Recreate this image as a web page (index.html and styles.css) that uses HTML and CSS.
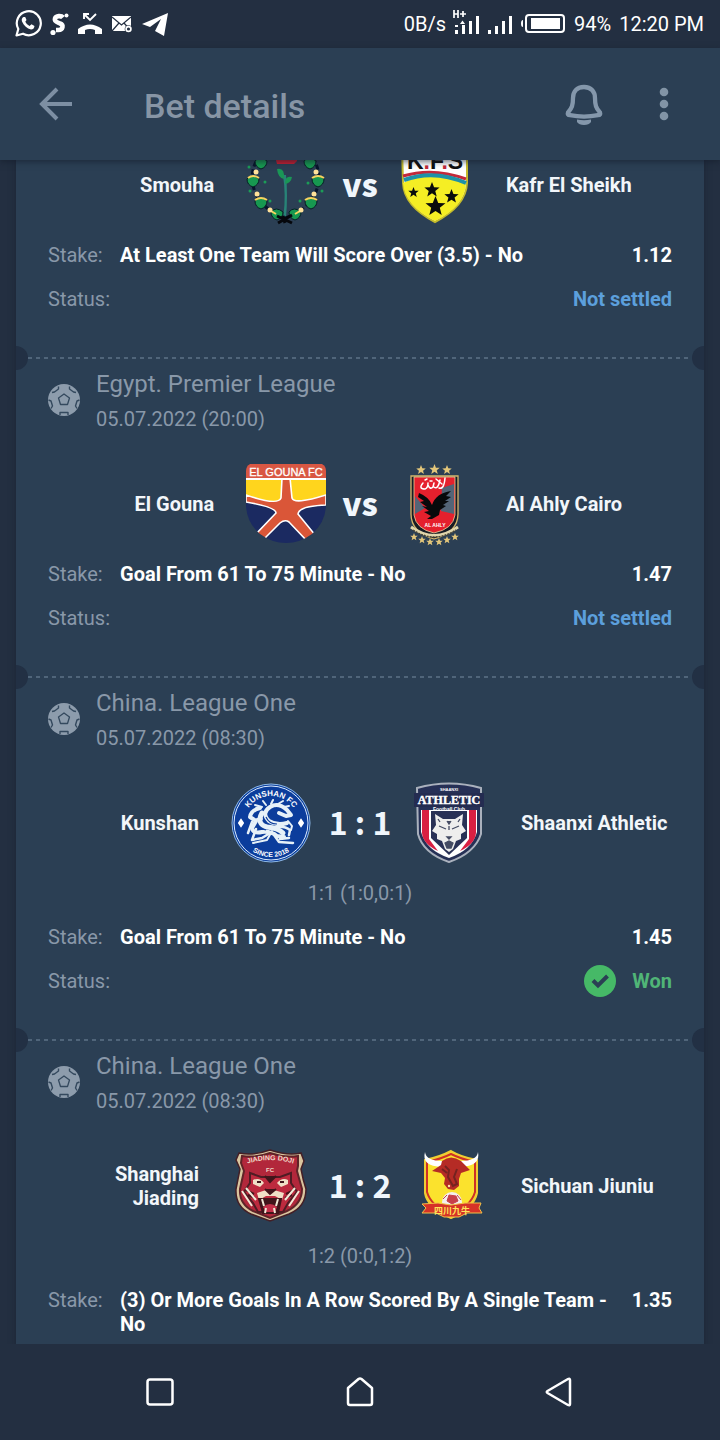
FILE: index.html
```html
<!DOCTYPE html>
<html lang="en">
<head>
<meta charset="utf-8">
<meta name="viewport" content="width=device-width, initial-scale=1">
<title>Bet details</title>
<link rel="stylesheet" href="styles.css">
</head>
<body>
<svg class="defs" aria-hidden="true">
  <symbol id="ball" viewBox="0 0 32 32">
    <circle cx="16" cy="16" r="16" fill="#8d9cac"/>
    <path d="M16 10L21.500 14L19.500 20.500H12.500L10.500 14Z" fill="none" stroke="#34495e" stroke-width="1.300" stroke-linejoin="round"/>
    <g fill="none" stroke="#34495e" stroke-width="1.400" stroke-linejoin="round">
      <path d="M4 8.500L6.500 8L10.500 5L10.500 2.500"/>
      <path d="M21.500 2.500L21.500 5L25.500 8L28 8.500"/>
      <path d="M.5 16L3 17L4.500 22L3 24.500"/>
      <path d="M31.500 16L29 17L27.500 22L29 24.500"/>
      <path d="M12 31V28.500H20V31"/>
    </g>
  </symbol>
  <symbol id="star5" viewBox="-10 -10 20 20">
    <path d="M0-10L2.600-3.400L9.500-3.100L4.100 1.300L5.900 8.100L0 4.200L-5.900 8.100L-4.100 1.300L-9.500-3.100L-2.600-3.400Z"/>
  </symbol>
</svg>

<div class="statusbar">
  <div class="notices">
    <svg width="28" height="30" viewBox="0 0 28 30" fill="none" stroke="#fff"><path d="M2.500 26.500L4.300 20A12 12 0 1 1 9 24.700Z" stroke-width="2.200" stroke-linejoin="round"/><path d="M9.500 8Q7 9.500 8 12.500C10 17 13 19.500 17 20.500Q20 20.500 20.500 17L17.500 15.300L15.500 17Q12.500 15.500 11.300 12.700L12.500 11L11.200 8Z" fill="#fff" stroke="none"/></svg>
    <svg width="19" height="24" viewBox="0 0 19 24"><path d="M13 5.500C11.500 3.500 6 3.500 5 6.500C4 10 8 10.500 10 11.500C14 13 13 18 8.500 18H6" fill="none" stroke="#fff" stroke-width="4.600"/><circle cx="16.500" cy="3.500" r="2" fill="#fff"/><circle cx="3" cy="20.500" r="2.600" fill="#fff"/></svg>
    <svg width="26" height="24" viewBox="0 0 26 24"><path d="M7 7V2H12M7 2L13 8L19 2" fill="none" stroke="#fff" stroke-width="1.900"/><path d="M1 22V17Q13 8 25 17V22H18V18Q13 16 8 18V22Z" fill="#fff"/></svg>
    <svg width="22" height="18" viewBox="0 0 22 18"><rect x="1" y="1" width="19" height="15" fill="#fff"/><path d="M1 2L10.500 10L20 2M1 16L8 8M20 16L13 8" fill="none" stroke="#232f41" stroke-width="1.200"/><circle cx="17.500" cy="14" r="3.800" fill="#232f41"/><circle cx="17.500" cy="14" r="2.400" fill="none" stroke="#fff" stroke-width="1.700"/></svg>
    <svg width="27" height="24" viewBox="0 0 27 24"><path d="M1 12L27 1L23 24L14 19L20 7L9 15Z" fill="#fff"/></svg>
  </div>
  <div class="vitals">
    <span>0B/s</span>
    <svg class="signals" width="58" height="28" viewBox="1 3 58 28" fill="#fff"><path d="M2 23H5V27H2ZM9 18H12V27H9ZM16 14H19V27H16ZM23 9H26V27H23ZM35 23H38V27H35ZM42 19H45V27H42ZM49 14H52V27H49ZM56 9H59V27H56ZM7 17H12L9.500 13.500ZM2 18H5V20H2Z"/><path d="M1 3V11M5 3V11M1 7H5M7 7H13M10 4V10" stroke="#fff" stroke-width="1.700"/></svg>
    <svg width="46" height="20" viewBox="0 0 46 20"><rect x="6" y="1" width="38" height="17" rx="3" fill="none" stroke="#fff" stroke-width="2"/><rect x="11" y="4" width="29" height="11" fill="#fff"/><path d="M3 6Q1 6 1 9.500Q1 13 3 13Z" fill="#fff"/></svg>
    <span>94%</span>
    <span>12:20 PM</span>
  </div>
</div>

<header class="appbar">
  <button class="icon-btn" aria-label="Back"><svg width="34" height="34" viewBox="0 0 34 34" fill="none" stroke="#7d8fa3" stroke-width="4"><path d="M18 2L3 17L18 32M3 17H33"/></svg></button>
  <h1 class="title">Bet details</h1>
  <button class="icon-btn" aria-label="Notifications"><svg width="40" height="42" viewBox="0 0 40 42"><path d="M20 4C12.500 4 9 9 9 15C9 22 8 25 4 29.500Q3 32 6 32.200Q20 35 34 32.200Q37 32 36 29.500C32 25 31 22 31 15C31 9 27.500 4 20 4Z" fill="none" stroke="#8497ab" stroke-width="4.300"/><path d="M13 36.500Q20 38 27 36.500V39Q25 42 20 42Q15 42 13 39Z" fill="#8497ab"/></svg></button>
  <button class="icon-btn" aria-label="More options"><svg width="10" height="34" viewBox="0 0 10 34" fill="#8294a6"><circle cx="5" cy="5" r="4.300"/><circle cx="5" cy="17" r="4.300"/><circle cx="5" cy="29" r="4.300"/></svg></button>
</header>

<main class="bets">
  <div class="ticket">
    <section class="bet bet-partial">
      <div class="match">
        <span class="team home">Smouha</span>
        <svg class="crest" viewBox="0 0 80 80" aria-label="Smouha crest">
          <path d="M29 0H50V10Q48 17 39 17Q31 16 29 10Z" fill="#0d1d58"/><path d="M28 8H51V16L48 19H31Z" fill="#c51f32"/>
          <path d="M37 30Q40 50 37.500 70L40 73Q42 50 40 30Z" fill="#288377"/><path d="M31 24Q39 22 38 34Q32 33 31 24M39 39Q39 30 46 32Q45 38 39 39" fill="#1a9656"/>
          <path d="M14 10C0 28 3 60 39 73C76 60 79 28 65 10" fill="none" stroke="#08152c" stroke-width="3" stroke-dasharray="5 3"/>
          <g fill="#179850" stroke="#061e24" stroke-width="1"><path id="acorn" d="M1 34Q6 28 13 34Q13 40 7 42Q1 40 1 34Z"/><use href="#acorn" x="65"/><use href="#acorn" transform="translate(8 22)"/><use href="#acorn" transform="translate(58 22)"/><use href="#acorn" transform="translate(24 33)"/><use href="#acorn" transform="translate(42 33)"/><use href="#acorn" transform="translate(8 -18)"/><use href="#acorn" transform="translate(57 -18)"/></g>
          <g fill="none" stroke="#f6d45f" stroke-width="2"><path d="M2 33Q7 29 13 33M66 33Q72 29 78 33M9 55Q15 51 21 55M59 55Q65 51 71 55M25 66L30 69M49 69L54 66"/></g>
          <g fill="#ffe19a"><circle cx="10" cy="27" r="2.500"/><circle cx="70" cy="27" r="2.500"/><circle cx="11" cy="49" r="2.500"/><circle cx="68" cy="49" r="2.500"/><circle cx="24" cy="65" r="2.500"/><circle cx="55" cy="65" r="2.500"/></g>
          <g fill="#1c9c57"><circle cx="3" cy="22" r="1.500"/><circle cx="19" cy="37" r="1.500"/><circle cx="62" cy="38" r="1.500"/><circle cx="76" cy="46" r="1.500"/><circle cx="4" cy="46" r="1.500"/><circle cx="24" cy="56" r="1.500"/><circle cx="54" cy="56" r="1.500"/></g>
          <path d="M31 71L46 78M46 70L32 78M37 71L39 78" stroke="#05070c" stroke-width="3"/>
        </svg>
        <span class="versus">vs</span>
        <svg class="crest" viewBox="0 0 80 80" aria-label="Kafr El Sheikh crest">
          <path d="M8 2H73V38Q72 61 41 77Q10 61 9 38Z" fill="#fff" stroke="#c4bb2c" stroke-width="2"/>
          <path d="M9 38Q38 23 72 39Q70 62 41 76Q11 61 9 38Z" fill="#f5ee24"/>
          <path d="M9 31Q39 22 72 34" fill="none" stroke="#c3293a" stroke-width="3"/><path d="M10 35Q40 24 72 38" fill="none" stroke="#1e91a8" stroke-width="4"/>
          <text x="41" y="24" text-anchor="middle" class="crest-text kfs">K<tspan fill="#c3293a">.</tspan>F<tspan fill="#c3293a">.</tspan>S</text>
          <g fill="#090b0c"><use href="#star5" x="30" y="37" width="16" height="16"/><use href="#star5" x="31" y="51" width="21" height="21"/><use href="#star5" x="50" y="44" width="15" height="15"/><use href="#star5" x="14" y="42" width="11" height="11"/></g>
        </svg>
        <span class="team away">Kafr El Sheikh</span>
      </div>
      <dl class="facts">
        <div class="fact"><dt>Stake:</dt><dd class="pick">At Least One Team Will Score Over (3.5) - No</dd><dd class="odds">1.12</dd></div>
        <div class="fact"><dt>Status:</dt><dd class="status pending">Not settled</dd></div>
      </dl>
    </section>

    <section class="bet">
      <div class="league">
        <svg class="ball" aria-hidden="true"><use href="#ball"/></svg>
        <div><h2 class="league-name">Egypt. Premier League</h2><p class="date">05.07.2022 (20:00)</p></div>
      </div>
      <div class="match">
        <span class="team home">El Gouna</span>
        <svg class="crest" viewBox="0 0 80 80" aria-label="El Gouna crest">
          <clipPath id="gouna"><path d="M4 0H76Q80 2 80 7V40Q80 58 66 70Q54 79 40 79Q26 79 14 70Q0 58 0 40V7Q0 2 4 0Z"/></clipPath>
          <g clip-path="url(#gouna)">
            <path d="M0 0H80V80H0Z" fill="#1b2a61"/><path d="M0 14H80V39L45 43L0 38Z" fill="#ffd51d"/>
            <path d="M36 14H44L46 34Q48 41 80 31V41Q53 42 52 50L70 72L62 78L43 58Q39 55 34 59L17 76L10 70L30 49Q30 43 0 38V31Q32 42 35 34Z" fill="#da5638" stroke="#fff" stroke-width="1.600"/>
            <path d="M0 0H80V14H0Z" fill="#d95743"/><path d="M0 15H80" stroke="#fff" stroke-width="1.800"/>
          </g>
          <text x="40" y="12" text-anchor="middle" class="crest-text gouna">EL GOUNA FC</text>
        </svg>
        <span class="versus">vs</span>
        <svg class="crest" viewBox="0 0 80 80" aria-label="Al Ahly crest">
          <path d="M17 12H64V50Q64 68 40 75Q17 68 17 50Z" fill="#171c25" stroke="#d4b66b" stroke-width="1.300"/>
          <path d="M20 13H61V51Q59 65 40 69Q22 65 20 51Z" fill="#e5202d" stroke="#e6d69b" stroke-width=".8"/>
          <path d="M48 24L60 20V50L47 47ZM21 32L31 44L21 50Z" fill="#536477"/>
          <path d="M25 29Q35 33 38 41Q42 29 57 27L52 32L57 33L51 37L55 37L49 41L52 42L46 46L45 51L38 55H33L37 52L30 48L35 47L28 42L33 43L26 38L30 37L24 33Z" fill="#07090b"/>
          <g fill="none" stroke="#fff" stroke-width="1.500" stroke-linecap="round"><path d="M29 19Q24 25 31 25Q34 24 34 19M34 21Q36 26 39 23L40 19M40 23Q44 26 46 16M45 24Q50 26 51 14M36 17H38M42 15L48 20M31 16L33 15"/></g>
          <text x="41" y="63" text-anchor="middle" class="crest-text ahly">AL AHLY</text>
          <path d="M17 63Q40 80 64 63" fill="none" stroke="#e0d5ab" stroke-width="3"/><path d="M19 66Q40 80 62 66" fill="none" stroke="#484638" stroke-width="1.500" stroke-dasharray="2 1"/>
          <g fill="#e3c67a"><use href="#star5" x="22" y="1" width="10" height="10"/><use href="#star5" x="35" y="0" width="11" height="11"/><use href="#star5" x="48" y="1" width="10" height="10"/><use href="#star5" x="16" y="69" width="8" height="8"/><use href="#star5" x="24" y="72" width="8" height="8"/><use href="#star5" x="32" y="74" width="8" height="8"/><use href="#star5" x="41" y="74" width="8" height="8"/><use href="#star5" x="49" y="72" width="8" height="8"/><use href="#star5" x="57" y="69" width="8" height="8"/></g>
        </svg>
        <span class="team away">Al Ahly Cairo</span>
      </div>
      <dl class="facts">
        <div class="fact"><dt>Stake:</dt><dd class="pick">Goal From 61 To 75 Minute - No</dd><dd class="odds">1.47</dd></div>
        <div class="fact"><dt>Status:</dt><dd class="status pending">Not settled</dd></div>
      </dl>
    </section>

    <section class="bet">
      <div class="league">
        <svg class="ball" aria-hidden="true"><use href="#ball"/></svg>
        <div><h2 class="league-name">China. League One</h2><p class="date">05.07.2022 (08:30)</p></div>
      </div>
      <div class="match">
        <span class="team home">Kunshan</span>
        <svg class="crest" viewBox="0 0 80 80" aria-label="Kunshan crest">
          <circle cx="40" cy="40" r="39" fill="#0b3d9c" stroke="#8eb9e8" stroke-width="1"/><circle cx="40" cy="40" r="37" fill="none" stroke="#dcecff" stroke-width="1"/>
          <path id="kunshan-top" d="M13 40A27 27 0 0 1 67 40" fill="none"/><path id="kunshan-bottom" d="M6 40A34 34 0 0 0 74 40" fill="none"/>
          <text class="crest-text arc"><textPath href="#kunshan-top" startOffset="50%" text-anchor="middle">KUNSHAN FC</textPath></text>
          <text class="crest-text arc-small"><textPath href="#kunshan-bottom" startOffset="50%" text-anchor="middle">SINCE 2018</textPath></text>
          <g fill="none" stroke="#e6f1f8" stroke-linecap="round" stroke-linejoin="round">
            <path d="M56 40Q46 43 38 38Q30 30 39 24Q47 19 56 27L60 32L55 33L48 30" stroke-width="4"/>
            <path d="M31 30Q25 41 36 44Q47 45 52 50" stroke-width="5"/>
            <path d="M29 25Q20 27 19 34L25 38L21 45Q22 51 31 49Q40 48 46 53L53 54" stroke-width="4"/>
            <path d="M21 39L17 50M25 46L21 57L31 55L39 50M45 44Q54 43 59 47L58 52M43 52L48 59L62 60M49 56L58 55" stroke-width="2.500"/>
            <path d="M35 22L32 18M40 21L42 17M47 21L52 18M53 24L58 23M31 24L24 22M57 38L61 43L60 47M31 36L26 36M41 48L36 57L22 60" stroke-width="2"/>
          </g>
          <path d="M43 25L48 27M40 31Q43 36 51 35M35 34Q38 41 46 41M27 45L35 47" fill="none" stroke="#0b3d9c" stroke-width="1.200"/>
          <path d="M8 40L10 37L12 40L10 43ZM68 40L70 37L72 40L70 43Z" fill="#fff" stroke="#fff" stroke-width="2"/>
        </svg>
        <span class="versus score">1 : 1</span>
        <svg class="crest" viewBox="0 0 80 80" aria-label="Shaanxi Athletic crest">
          <path d="M8 5Q40-4 72 5V51Q66 70 40 79Q14 70 9 51Z" fill="#263056" stroke="#aab1bd" stroke-width="2"/>
          <path d="M12 27H68V49Q63 67 40 75Q17 67 12 49Z" fill="#fff"/><path d="M13 27H20V56L29 68Q14 61 13 50ZM60 27H67V50Q66 61 51 68L60 56Z" fill="#d91f42"/>
          <path d="M22 28H58V55L40 72L22 55Z" fill="#293156"/>
          <path d="M26 31L34 36H46L54 31L53 42L57 48L52 51L52 56L47 58L44 66L40 69L36 66L33 58L28 56L28 51L23 48L27 42Z" fill="#eeeeed"/>
          <path d="M30 43L37 46M50 43L43 46M38 38L40 41L42 38M40 43V47M38 54H42L40 56ZM36 60L40 58L44 60L42 65H38ZM29 36L31 39M51 36L49 39" fill="#444b63" stroke="#444b63" stroke-width="1.300"/>
          <path d="M5 10H75V24H5Z" fill="#242c51"/><text x="40" y="8" text-anchor="middle" class="crest-text tiny">SHAANXI</text><text x="40" y="21" text-anchor="middle" class="crest-text athletic">ATHLETIC</text><text x="40" y="28" text-anchor="middle" class="crest-text tiny club">Football Club</text>
        </svg>
        <span class="team away">Shaanxi Athletic</span>
      </div>
      <p class="periods">1:1 (1:0,0:1)</p>
      <dl class="facts">
        <div class="fact"><dt>Stake:</dt><dd class="pick">Goal From 61 To 75 Minute - No</dd><dd class="odds">1.45</dd></div>
        <div class="fact"><dt>Status:</dt><dd class="status won"><svg class="check" viewBox="0 0 32 32" aria-hidden="true"><circle cx="16" cy="16" r="16" fill="#46b967"/><path d="M9 15.500L14 20.500L23.500 11" fill="none" stroke="#2b3f54" stroke-width="4"/></svg>Won</dd></div>
      </dl>
    </section>

    <section class="bet">
      <div class="league">
        <svg class="ball" aria-hidden="true"><use href="#ball"/></svg>
        <div><h2 class="league-name">China. League One</h2><p class="date">05.07.2022 (08:30)</p></div>
      </div>
      <div class="match">
        <span class="team home">Shanghai Jiading</span>
        <svg class="crest" viewBox="0 0 80 80" aria-label="Shanghai Jiading crest">
          <path d="M8 7Q22 10 39 4Q57 10 70 7L73 15L70 23Q72 34 75 43Q75 61 58 68L39 75L20 68Q4 61 5 43L9 23L5 14Z" fill="#d9c59f" stroke="#431f26" stroke-width="1.500"/>
          <path d="M11 10Q26 12 39 7Q53 12 67 10L67 20L66 25L71 43Q71 58 56 65L39 72L22 65Q8 58 9 43L13 25L10 17Z" fill="#b2273b" stroke="#5f2328" stroke-width="2"/>
          <path d="M19 27L30 31H49L60 27L60 37L66 46L57 57L52 66H27L22 57L13 46L19 37Z" fill="#bd2a3e" stroke="#4f1c24" stroke-width="2"/>
          <path d="M22 34Q29 31 33 37L29 41L22 38ZM46 37Q51 31 57 34L57 38L50 41ZM26 47L35 44L39 48L43 44L53 47L51 54L44 50H35L28 54Z" fill="#f0dfc6"/>
          <path d="M34 43L39 48L45 43M28 53H50L47 67H32ZM15 44L23 48M17 49L24 52M63 44L55 48M61 49L54 52M34 30L39 36L45 30M26 36H30M49 36H53" fill="#42151b" stroke="#42151b" stroke-width="2"/>
          <path d="M32 61Q39 55 46 61L44 66H35Z" fill="#c6314a"/>
          <path d="M31 53L33 60M47 53L45 60M34 67L35 62M44 67L43 62M11 45L21 60M68 45L58 60M15 42L25 54M64 42L54 54" stroke="#f2ead8" stroke-width="2"/>
          <path id="jiading-arc" d="M12 19Q39 9 67 19" fill="none"/><text class="crest-text jiading"><textPath href="#jiading-arc" startOffset="50%" text-anchor="middle">JIADING DOJI</textPath></text><text x="39" y="26" text-anchor="middle" class="crest-text jiading-fc">FC</text>
        </svg>
        <span class="versus score">1 : 2</span>
        <svg class="crest" viewBox="0 0 80 80" aria-label="Sichuan Jiuniu crest">
          <path d="M16 14Q31 11 42 5Q52 11 68 14V47Q65 62 42 72Q18 61 16 47Z" fill="#f8df25" stroke="#f0cd32" stroke-width="2"/><path d="M18 16Q32 13 42 8Q52 13 66 16V46Q62 60 42 69Q22 60 18 46Z" fill="#fbe22d" stroke="#ce3028" stroke-width="2"/>
          <path d="M16 6Q17 15 34 15L33 21Q12 20 16 6ZM69 6Q68 15 51 15L51 21Q72 20 69 6Z" fill="#fff"/>
          <path d="M33 15Q42 8 52 15L61 24L52 27L50 33L50 40L45 44L39 43L35 38L36 32L32 27L23 25L32 19Z" fill="#b52b25"/><path d="M36 20L40 24L39 31L44 40L48 38L45 31L48 23M38 27L33 23" fill="none" stroke="#752320" stroke-width="2"/><circle cx="40" cy="40" r="1.200" fill="#ffe6a8"/>
          <circle cx="43" cy="56" r="10" fill="#f4eeee"/><path d="M40 49L47 50L49 55L43 58L38 55ZM34 53L38 49M48 49L52 54" fill="#c7404a" stroke="#c7404a"/>
          <path d="M13 58L29 57L42 59L56 57L72 57L70 62L73 67H58L50 71H35L27 67H13L17 62Z" fill="#d63227" stroke="#f2c247" stroke-width="1"/><text x="43" y="68" text-anchor="middle" class="crest-text sichuan">四川九牛</text>
        </svg>
        <span class="team away">Sichuan Jiuniu</span>
      </div>
      <p class="periods">1:2 (0:0,1:2)</p>
      <dl class="facts">
        <div class="fact"><dt>Stake:</dt><dd class="pick">(3) Or More Goals In A Row Scored By A Single Team - No</dd><dd class="odds">1.35</dd></div>
      </dl>
    </section>
  </div>
</main>

<nav class="sysnav" aria-label="System">
  <button class="sys-btn" aria-label="Recent apps"><svg width="32" height="32" viewBox="0 0 32 32"><rect x="3.500" y="3.500" width="25" height="25" rx="2.500"/></svg></button>
  <button class="sys-btn" aria-label="Home"><svg width="32" height="32" viewBox="0 0 32 32"><path d="M4 12L14.500 3Q16 2 17.500 3L28 12V27Q28 29 26 29H6Q4 29 4 27Z"/></svg></button>
  <button class="sys-btn" aria-label="Back"><svg width="32" height="32" viewBox="0 0 32 32"><path d="M26 4V28Q26 30 24 29L3.500 17Q2 16 3.500 15L24 3Q26 2 26 4Z"/></svg></button>
</nav>
</body>
</html>
```

FILE: styles.css
```css
* { box-sizing: border-box; }
body {
  margin: 0;
  height: 100vh;
  display: flex;
  flex-direction: column;
  background: #232f41;
  color: #fff;
  font-family: Roboto, "Liberation Sans", sans-serif;
  font-size: 20px;
  line-height: 24px;
}
h1, h2, p, dl, dd { margin: 0; }
button { padding: 0; border: 0; background: none; }
svg { display: block; flex: none; }
.defs { position: absolute; width: 0; height: 0; }

.statusbar {
  flex: none;
  height: 48px;
  padding: 0 16px 0 14px;
  display: flex;
  align-items: center;
  justify-content: space-between;
}
.notices { display: flex; align-items: center; gap: 8px; }
.vitals { display: flex; align-items: center; gap: 8px; }
.signals { overflow: visible; }

.appbar {
  flex: none;
  height: 112px;
  padding: 0 16px;
  display: flex;
  align-items: center;
  background: #2b3f54;
  box-shadow: 0 2px 6px rgba(20, 28, 42, .6);
  z-index: 1;
}
.icon-btn { width: 80px; height: 80px; display: grid; place-items: center; }
.title {
  flex: 1;
  padding: 4px 0 0 48px;
  color: #8795a5;
  font-size: 34px;
  font-weight: 500;
  line-height: 40px;
}

.bets { flex: 1; min-height: 0; overflow: hidden; padding: 0 16px; }
.ticket { background: #2b3f54; box-shadow: 0 0 6px rgba(20, 28, 42, .5); }
.bet {
  position: relative;
  padding: 12px 32px 46px;
  background: repeating-linear-gradient(90deg, #50657a 0 4px, transparent 4px 8px) 12px 0 / calc(100% - 24px) 2px no-repeat;
}
.bet-partial { margin-top: -15px; padding-top: 0; background: none; }
/* Punched notches at both ends of the tear line */
.bet:not(.bet-partial)::before,
.bet:not(.bet-partial)::after {
  content: "";
  position: absolute;
  top: -11px;
  width: 12px;
  height: 24px;
  background: #223044;
}
.bet::before { left: 0; border-radius: 0 12px 12px 0; }
.bet::after { right: 0; border-radius: 12px 0 0 12px; }

.league { display: flex; align-items: center; gap: 16px; color: #8998a9; }
.ball { width: 32px; height: 32px; }
.league-name { font-size: 24px; font-weight: 400; line-height: 30px; }
.date { padding-top: 8px; }

.match {
  min-height: 80px;
  display: grid;
  grid-template-columns: 1fr 80px auto 80px 1fr;
  align-items: center;
}
.league + .match { margin-top: 33px; }
.crest { width: 80px; height: 80px; overflow: visible; }
.team { font-weight: 700; color: #f2f6fa; }
.home { padding-right: 32px; text-align: right; }
.away { padding-left: 32px; }
.versus {
  padding: 0 16px 4px;
  color: #f0f6fc;
  font: 900 32px/40px "Noto Sans CJK SC", sans-serif;
  text-align: center;
}
.score { min-width: 98px; font-weight: 700; }
.periods { margin-top: 18px; text-align: center; color: #8998a9; }
.facts { margin-top: 18px; display: grid; gap: 20px; }
.periods + .facts { margin-top: 20px; }
.fact { display: flex; }
.fact dt { flex: none; width: 72px; color: #8998a9; }
.pick { flex: 1; font-weight: 700; padding-right: 24px; }
.odds { font-weight: 700; }
.status { margin-left: auto; display: flex; align-items: center; gap: 16px; font-weight: 700; }
.pending { color: #5c9fdc; }
.won { color: #50b577; }
.check { width: 32px; height: 32px; margin: -4px 0; }

.crest-text { font-family: "Liberation Sans", sans-serif; font-weight: 700; fill: #fff; }
.kfs { font-size: 23px; fill: #101010; }
.gouna { font-size: 11px; font-weight: 400; stroke: #fff; stroke-width: .3px; }
.ahly { font-size: 5px; }
.tiny { font-size: 4px; }
.club { font-size: 5px; }
.arc { font-size: 8px; }
.arc-small { font-size: 7px; }
.athletic { font-size: 12px; font-family: "Liberation Serif", serif; stroke: #fff; stroke-width: .4px; }
.jiading { font-size: 7px; fill: #f0dcca; }
.jiading-fc { font-size: 6px; fill: #f0dcca; }
.sichuan { font-size: 9px; font-family: "Noto Sans CJK SC", sans-serif; fill: #ffe45b; }

.sysnav {
  flex: none;
  height: 96px;
  padding: 0 60px;
  display: grid;
  grid-template-columns: repeat(3, 1fr);
  align-items: center;
  background: #232f41;
  z-index: 1;
}
.sys-btn { height: 96px; display: grid; place-items: center; }
.sys-btn svg { fill: none; stroke: #fff; stroke-width: 2.5; stroke-linejoin: round; }
```
